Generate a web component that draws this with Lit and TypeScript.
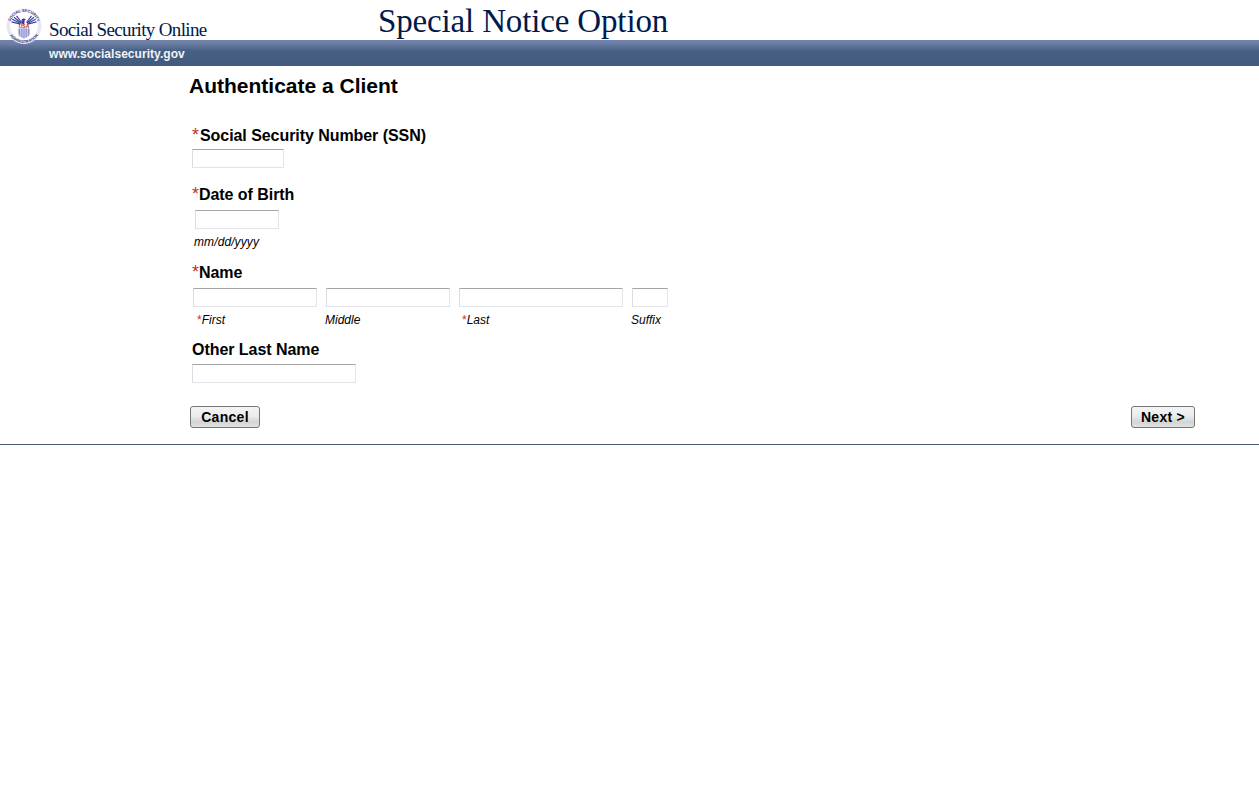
import { css, html, LitElement, svg } from 'lit'
import { customElement } from 'lit/decorators.js'

// fan of wing feathers, mirrored round the middle of the seal
const feathers = [
  'M15.500 14.500L10.500 7.800',
  'M15 15L8 9.300',
  'M14.500 15.500L6.300 11.300',
  'M14.500 16.200L5.500 13.800',
]

const seal = svg`
  <svg class="seal" viewBox="0 0 36 36" width="36" height="36" aria-hidden="true">
    <defs>
      <path id="arcTop" d="M3.800 18a14.200 14.200 0 0 1 28.400 0" />
      <path id="arcBottom" d="M1 18a17 17 0 0 0 34 0" />
    </defs>
    <circle cx="18" cy="18" r="17.800" fill="#fff" />
    <circle cx="18" cy="18" r="15.700" fill="none" stroke="#e6e7f3" stroke-width="3.400" />
    <text class="ring"><textPath href="#arcTop" startOffset="50%" text-anchor="middle">SOCIAL SECURITY</textPath></text>
    <text class="ring"><textPath href="#arcBottom" startOffset="50%" text-anchor="middle">ADMINISTRATION</textPath></text>
    <g class="wing">${feathers.map((d) => svg`<path d=${d} />`)}</g>
    <g class="wing" transform="matrix(-1 0 0 1 36 0)">${feathers.map((d) => svg`<path d=${d} />`)}</g>
    <path d="M15.500 12c.8-1.300 2.200-1.800 3.200-1.300l1.300 1-1.300.4-.4 3.900h-2.800z" fill="#3c3f9c" />
    <text class="usa" x="18" y="20" text-anchor="middle">USA</text>
    <path d="M12.500 20.500h11v5.500c0 2-2.500 3.300-5.500 4.500-3-1.200-5.500-2.500-5.500-4.500z" fill="#7f81c8" />
    <path d="M14.300 20.500v8M16.100 20.500v9.500M18 20.500v10M19.900 20.500v9.500M21.700 20.500v8" stroke="#eeeefa" stroke-width=".8" />
  </svg>
`

@customElement('app-root')
export class AppRoot extends LitElement {
  private _star() {
    return html`<span class="star">*</span>`
  }

  render() {
    return html`
      <header>
        <div class="top">
          <span class="brand">Social Security Online</span>
          <h1>Special Notice Option</h1>
        </div>
        <div class="band">www.socialsecurity.gov</div>
        ${seal}
      </header>

      <main>
        <h2>Authenticate a Client</h2>

        <form>
          <div class="field ssn">
            <label>${this._star()}<span class="tight">Social Security Number (SSN)</span></label>
            <input class="w-ssn" type="text" />
          </div>

          <div class="field dob">
            <label>${this._star()}Date of Birth</label>
            <input class="w-dob" type="text" />
            <div class="hint">mm/dd/yyyy</div>
          </div>

          <div class="field name">
            <label>${this._star()}Name</label>
            <div class="name-row">
              <div class="cell"><input class="w-first" type="text" /><div class="hint first">${this._star()}First</div></div>
              <div class="cell"><input class="w-first" type="text" /><div class="hint middle">Middle</div></div>
              <div class="cell"><input class="w-last" type="text" /><div class="hint last">${this._star()}Last</div></div>
              <div class="cell"><input class="w-suffix" type="text" /><div class="hint middle">Suffix</div></div>
            </div>
          </div>

          <div class="field other">
            <label>Other Last Name</label>
            <input class="w-other" type="text" />
          </div>

          <div class="actions">
            <button type="button" class="cancel">Cancel</button>
            <button type="button" class="next">Next &gt;</button>
          </div>
        </form>
      </main>
      <hr />
    `
  }

  static styles = css`
    :host {
      display: block;
      min-height: 797px;
      background: #fff;
      color: #000;
      font-family: 'Liberation Sans', Arial, sans-serif;
    }

    header {
      position: relative;
    }

    .top {
      height: 40px;
      display: flex;
      align-items: flex-start;
      padding-left: 49px;
    }

    .brand {
      width: 329px;
      padding-top: 19px;
      font-family: 'Liberation Serif', serif;
      font-size: 19px;
      line-height: 22px;
      letter-spacing: -0.66px;
      color: #001a4d;
      white-space: nowrap;
    }

    h1 {
      margin: 0;
      font-family: 'Liberation Serif', serif;
      font-weight: 400;
      font-size: 33px;
      line-height: 42px;
      letter-spacing: -0.15px;
      color: #001a4d;
      white-space: nowrap;
    }

    .band {
      height: 26px;
      box-sizing: border-box;
      padding: 6px 0 0 49px;
      background: linear-gradient(#7384ac 0, #6f80a6 3px, #465f84 11px, #415a7e 100%);
      color: #f0f3f8;
      font-size: 12px;
      line-height: 16px;
      font-weight: 700;
      letter-spacing: 0.05px;
    }

    .seal {
      position: absolute;
      left: 6px;
      top: 8px;
    }

    .seal .ring {
      font-family: 'Liberation Sans', sans-serif;
      font-size: 3.900px;
      font-weight: 700;
      fill: #3f4389;
    }

    .seal .wing path {
      fill: none;
      stroke: #3f42a6;
      stroke-width: 1.200;
    }

    .seal .usa {
      font-family: 'Liberation Sans', sans-serif;
      font-size: 5px;
      font-weight: 700;
      fill: #c8202c;
    }

    main {
      padding: 8px 64px 0 189px;
    }

    h2 {
      margin: 0;
      font-size: 21px;
      line-height: 24px;
      font-weight: 700;
    }

    form {
      padding: 28px 0 0 1px;
    }

    label {
      display: block;
      padding-left: 2px;
      font-size: 16px;
      line-height: 20px;
      font-weight: 700;
      letter-spacing: -0.05px;
    }

    .star {
      color: #c0341f;
      font-weight: 400;
      font-size: 18px;
      line-height: 0;
    }

    .hint .star {
      font-size: 12px;
      font-style: normal;
    }

    .tight {
      margin-left: 1px;
      letter-spacing: -0.06px;
    }

    input {
      display: block;
      box-sizing: border-box;
      height: 19px;
      margin: 0;
      padding: 0;
      background: #fff;
      border: 1px solid;
      border-color: #a5a5a5 #e3e3ea #e3e3ea #dcdce2;
      outline: none;
    }

    .w-ssn { width: 92px; margin: 3px 0 0 2px; }
    .w-dob { width: 84px; margin: 5px 0 0 5px; }
    .w-first { width: 124px; }
    .w-last { width: 164px; }
    .w-suffix { width: 36px; }
    .w-other { width: 164px; margin: 4px 0 0 2px; }

    .dob { padding-top: 17px; }
    .name { padding-top: 14px; }
    .other { padding-top: 13px; }

    .hint {
      font-size: 12px;
      line-height: 14px;
      font-style: italic;
    }

    .dob .hint {
      padding: 6px 0 0 4px;
      letter-spacing: 0.1px;
    }

    .name-row {
      display: flex;
      gap: 9px;
      padding: 5px 0 0 3px;
    }

    .cell .hint { padding-top: 6px; }
    .cell .first { padding-left: 4px; }
    .cell .middle { margin-left: -1px; }
    .cell .last { padding-left: 3px; }

    .actions {
      display: flex;
      justify-content: space-between;
      padding-top: 23px;
    }

    button {
      box-sizing: border-box;
      height: 22px;
      padding: 0;
      border: 1px solid #767676;
      border-radius: 3px;
      background: linear-gradient(#f4f4f4 0, #ececec 45%, #d4d4d4 75%, #e2e2e2 100%);
      color: #000;
      font-family: inherit;
      font-size: 14px;
      font-weight: 700;
      line-height: 20px;
      letter-spacing: 0.3px;
    }

    .cancel { width: 70px; }
    .next { width: 64px; }

    hr {
      height: 1px;
      margin: 16px 0 0;
      border: 0;
      background: #415a7e;
    }
  `
}

declare global {
  interface HTMLElementTagNameMap {
    'app-root': AppRoot
  }
}
